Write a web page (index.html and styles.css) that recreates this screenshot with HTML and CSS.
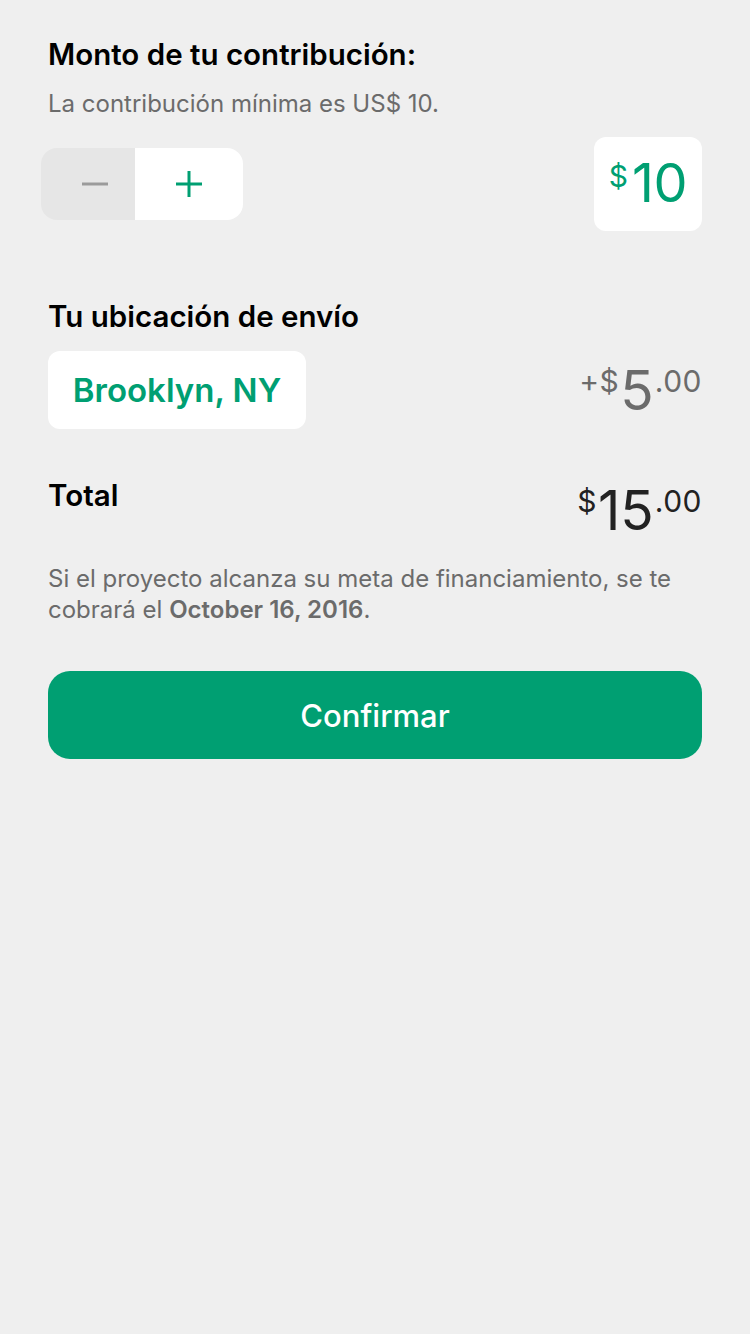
FILE: index.html
```html
<!DOCTYPE html>
<html lang="es">
<head>
<meta charset="utf-8">
<title>Contribución</title>
<link rel="stylesheet" href="styles.css">
</head>
<body>
<main class="page">
  <section class="pledge">
    <h1 class="heading">Monto de tu contribución:</h1>
    <p class="hint">La contribución mínima es US$ 10.</p>
    <div class="pledge-row">
      <div class="stepper">
        <button class="step step-minus" aria-label="Menos">
          <svg width="26" height="26" viewBox="0 0 26 26"><path d="M0 13H26" stroke="#9b9b9b" stroke-width="3"/></svg>
        </button>
        <button class="step step-plus" aria-label="Más">
          <svg width="26" height="26" viewBox="0 0 26 26"><path d="M0 13H26M13 0V26" stroke="#009f72" stroke-width="3"/></svg>
        </button>
      </div>
      <div class="amount-box"><span class="amount-cur">$</span><span class="amount-val">10</span></div>
    </div>
  </section>

  <section class="shipping">
    <h2 class="heading">Tu ubicación de envío</h2>
    <div class="ship-row">
      <button class="location">Brooklyn, NY</button>
      <div class="price price-ship"><span class="p-sm">+$</span><span class="p-lg">5</span><span class="p-sm">.00</span></div>
    </div>
  </section>

  <section class="total-row">
    <h2 class="heading total-label">Total</h2>
    <div class="price price-total"><span class="p-sm">$</span><span class="p-lg">15</span><span class="p-sm">.00</span></div>
  </section>

  <p class="note">Si el proyecto alcanza su meta de financiamiento, se te cobrará el <strong>October 16, 2016</strong>.</p>

  <button class="confirm">Confirmar</button>
</main>
</body>
</html>
```

FILE: styles.css
```css
* { box-sizing: border-box; }
html, body { margin: 0; padding: 0; }
body {
  background: #efefef;
  font-family: Inter, "Liberation Sans", sans-serif;
  color: #000;
  width: 750px;
  min-height: 1334px;
}
.page {
  padding: 36px 48px 0 48px;
  display: flex;
  flex-direction: column;
}
.heading {
  margin: 0;
  font-size: 29.5px;
  line-height: 36px;
  font-weight: 600;
  color: #000;
}
.hint {
  margin: 17px 0 0 0;
  font-size: 24px;
  line-height: 30px;
  color: #6b6b6b;
}
.pledge-row {
  display: flex;
  justify-content: space-between;
  align-items: center;
  margin-top: 18px;
}
.stepper {
  display: flex;
  margin-left: -7px;
  height: 72px;
  border-radius: 16px;
  overflow: hidden;
}
.step {
  border: 0;
  padding: 0;
  display: flex;
  align-items: center;
  justify-content: center;
  height: 72px;
}
.step-minus { width: 94px; background: #e6e6e6; padding-left: 14px; }
.step-plus { width: 108px; background: #fff; }
.amount-box {
  width: 108px;
  height: 94px;
  background: #fff;
  border-radius: 12px;
  display: flex;
  align-items: flex-start;
  justify-content: center;
  padding-top: 19px;
  color: #009f72;
}
.amount-cur { font-size: 30px; line-height: 32px; font-weight: 400; margin: 4px 4px 0 0; }
.amount-val { font-size: 54px; line-height: 54px; font-weight: 400; letter-spacing: -0.5px; }

.shipping { margin-top: 67px; }
.ship-row {
  display: flex;
  justify-content: space-between;
  align-items: center;
  margin-top: 17px;
}
.location {
  border: 0;
  background: #fff;
  border-radius: 12px;
  width: 258px;
  height: 78px;
  font-family: inherit;
  font-size: 33px;
  font-weight: 600;
  color: #009f72;
  padding: 0;
}
.price {
  display: flex;
  align-items: flex-start;
  font-weight: 400;
}
.p-sm { font-size: 30px; line-height: 32px; margin-top: 2px; letter-spacing: 0.5px; }
.p-lg { font-size: 55px; line-height: 54px; margin: 0 1px; }
.price-ship { color: #6b6b6b; }
.price-total { color: #222; margin-top: 6px; }

.total-row {
  display: flex;
  justify-content: space-between;
  align-items: flex-start;
  margin-top: 48px;
}

.note {
  margin: 26px 0 0 0;
  font-size: 24px;
  line-height: 31px;
  color: #6b6b6b;
}
.note strong { font-weight: 600; }

.confirm {
  margin-top: 46px;
  height: 88px;
  border: 0;
  border-radius: 22px;
  background: #009f72;
  color: #fff;
  font-family: inherit;
  font-size: 31px;
  font-weight: 500;
}
```
